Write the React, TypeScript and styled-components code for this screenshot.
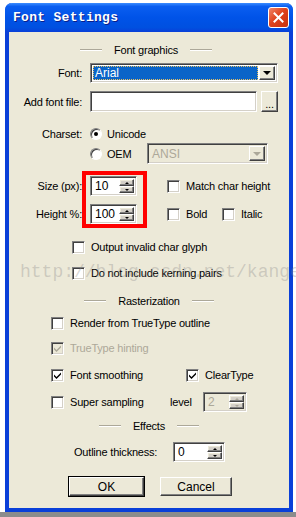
import styled, { createGlobalStyle } from "styled-components";

const GlobalStyle = createGlobalStyle`
  html, body { margin: 0; padding: 0; background: #fff; }
  body { width: 296px; height: 517px; overflow: hidden; font-family: "Liberation Sans", Arial, sans-serif; }
`;

const sunken = `
  border: 1px solid;
  border-color: #808080 #fff #fff #808080;
  box-shadow: inset 1px 1px #404040, inset -1px -1px #d4d0c8;
`;

const raised = `
  border: 1px solid;
  border-color: #fff #404040 #404040 #fff;
  box-shadow: inset -1px -1px #808080, inset 1px 1px #ece9d8;
`;

const Page = styled.div`
  position: relative;
  width: 296px;
  height: 517px;
  overflow: hidden;
  display: flex;
  flex-direction: column;
`;

const Window = styled.div`
  margin: 3px 0 0 5px;
  width: 280px;
  height: 505px;
  border: 4px solid #0a3fd8;
  border-top: none;
  border-radius: 7px 7px 0 0;
  display: flex;
  flex-direction: column;
  background: #ece9d8;
`;

const TitleBar = styled.div`
  height: 29px;
  margin: 0 -4px;
  border-radius: 7px 7px 0 0;
  background: linear-gradient(#3b8cff 0%, #0a5ef0 12%, #0053e8 50%, #0050e0 85%, #0a3fd8 100%);
  display: flex;
  align-items: center;
  justify-content: space-between;
  padding: 0 4px 0 8px;
`;

const TitleText = styled.div`
  font-family: "Liberation Mono", "DejaVu Sans Mono", monospace;
  font-weight: bold;
  font-size: 13px;
  letter-spacing: 0.3px;
  color: #fff;
  text-shadow: 1px 1px #0a1e8a;
`;

const CloseButton = styled.div`
  width: 19px;
  height: 19px;
  border: 1px solid #fff;
  border-radius: 3px;
  background: linear-gradient(135deg, #f0866a, #e0441e 45%, #c8320e);
  display: flex;
  align-items: center;
  justify-content: center;
`;

const Body = styled.div`
  position: relative;
  flex: 1;
  display: flex;
  flex-direction: column;
  font-size: 11px;
  letter-spacing: -0.2px;
  color: #000;
`;

const Row = styled.div<{ $top: number; $h: number; $indent?: number }>`
  margin-top: ${(p) => p.$top}px;
  height: ${(p) => p.$h}px;
  padding-left: ${(p) => p.$indent ?? 0}px;
  display: flex;
  align-items: center;
  flex-shrink: 0;
`;

const Cell = styled.div<{ $w: number }>`
  width: ${(p) => p.$w}px;
  flex-shrink: 0;
  display: flex;
  align-items: center;
  white-space: nowrap;
`;

const Section = styled.div<{ $top: number; $shift?: number }>`
  margin-top: ${(p) => p.$top}px;
  height: 14px;
  display: flex;
  align-items: center;
  justify-content: center;
  gap: 12px;
  margin-left: ${(p) => p.$shift ?? 0}px;
  flex-shrink: 0;
`;

const Etch = styled.div`
  width: 22px;
  height: 1px;
  background: #aca899;
  border-bottom: 1px solid #fff;
`;

const Label = styled.div`
  width: 73px;
  text-align: right;
  margin-right: 8px;
  white-space: nowrap;
`;

const Text = styled.span<{ $disabled?: boolean; $gap?: number }>`
  white-space: nowrap;
  color: ${(p) => (p.$disabled ? "#aca899" : "#000")};
  margin-left: ${(p) => p.$gap ?? 6}px;
`;

const Combo = styled.div<{ $w: number; $disabled?: boolean }>`
  ${sunken}
  width: ${(p) => p.$w}px;
  height: 100%;
  box-sizing: border-box;
  background: ${(p) => (p.$disabled ? "#ece9d8" : "#fff")};
  display: flex;
  align-items: stretch;
  padding: 2px;
  gap: 1px;
`;

const ComboValue = styled.div<{ $selected?: boolean; $disabled?: boolean }>`
  flex: 1;
  display: flex;
  align-items: center;
  padding-left: 2px;
  font-size: 12px;
  letter-spacing: 0;
  color: ${(p) => (p.$selected ? "#fff" : p.$disabled ? "#aca899" : "#000")};
  background: ${(p) => (p.$selected ? "#0a64c8" : "transparent")};
  outline: ${(p) => (p.$selected ? "1px dotted #e8c060" : "none")};
  outline-offset: -1px;
`;

const DropButton = styled.div`
  ${raised}
  width: 14px;
  background: #ece9d8;
  display: flex;
  align-items: center;
  justify-content: center;
`;

const Arrow = styled.div<{ $up?: boolean; $disabled?: boolean; $size?: number }>`
  width: 0;
  height: 0;
  border-left: ${(p) => p.$size ?? 4}px solid transparent;
  border-right: ${(p) => p.$size ?? 4}px solid transparent;
  ${(p) => (p.$up ? "border-bottom" : "border-top")}: ${(p) => p.$size ?? 4}px solid
    ${(p) => (p.$disabled ? "#aca899" : "#000")};
`;

const TextBox = styled.div<{ $w: number }>`
  ${sunken}
  width: ${(p) => p.$w}px;
  height: 100%;
  box-sizing: border-box;
  background: #fff;
`;

const BrowseButton = styled.div`
  ${raised}
  width: 17px;
  height: 100%;
  box-sizing: border-box;
  margin-left: 4px;
  background: #ece9d8;
  display: flex;
  align-items: flex-end;
  justify-content: center;
  padding-bottom: 4px;
  font-size: 11px;
  line-height: 6px;
`;

const RadioDot = styled.div<{ $on?: boolean }>`
  width: 12px;
  height: 12px;
  flex-shrink: 0;
  box-sizing: border-box;
  border-radius: 50%;
  border: 1px solid;
  border-color: #808080 #fff #fff #808080;
  box-shadow: inset 1px 1px #404040;
  background: #fff;
  display: flex;
  align-items: center;
  justify-content: center;
  &::after {
    content: "";
    width: 4px;
    height: 4px;
    border-radius: 50%;
    background: ${(p) => (p.$on ? "#000" : "transparent")};
  }
`;

const Box = styled.div<{ $disabled?: boolean }>`
  width: 13px;
  height: 13px;
  box-sizing: border-box;
  flex-shrink: 0;
  ${sunken}
  background: ${(p) => (p.$disabled ? "#ece9d8" : "#fff")};
  display: flex;
  align-items: center;
  justify-content: center;
`;

const Spin = styled.div<{ $w: number; $disabled?: boolean }>`
  ${sunken}
  width: ${(p) => p.$w}px;
  height: 100%;
  flex-shrink: 0;
  box-sizing: border-box;
  background: ${(p) => (p.$disabled ? "#ece9d8" : "#fff")};
  display: flex;
  padding: 2px;
`;

const SpinValue = styled.div<{ $disabled?: boolean }>`
  flex: 1;
  display: flex;
  align-items: center;
  padding-left: 2px;
  font-size: 12px;
  letter-spacing: 0;
  color: ${(p) => (p.$disabled ? "#aca899" : "#000")};
`;

const SpinButtons = styled.div`
  width: 15px;
  display: flex;
  flex-direction: column;
`;

const SpinHalf = styled.div`
  ${raised}
  flex: 1;
  background: #d4d0c8;
  display: flex;
  align-items: center;
  justify-content: center;
`;

const PushButton = styled.div<{ $w: number; $default?: boolean; $gap?: number }>`
  width: ${(p) => p.$w}px;
  height: 100%;
  box-sizing: border-box;
  margin-left: ${(p) => p.$gap ?? 0}px;
  border: 1px solid ${(p) => (p.$default ? "#000" : "transparent")};
  display: flex;
`;

const PushFace = styled.div`
  ${raised}
  flex: 1;
  background: #ece9d8;
  display: flex;
  align-items: center;
  justify-content: center;
  font-size: 12px;
  letter-spacing: 0;
`;

const Highlight = styled.div`
  position: absolute;
  left: 73px;
  top: 139px;
  width: 65px;
  height: 57px;
  box-sizing: border-box;
  border: 4px solid #ff0000;
  pointer-events: none;
`;

const Watermark = styled.div`
  position: absolute;
  left: 20px;
  top: 262px;
  font-family: "Liberation Mono", "Courier New", monospace;
  font-size: 18px;
  line-height: 20px;
  color: rgba(140, 140, 140, 0.35);
  white-space: nowrap;
  pointer-events: none;
`;

const BottomStrip = styled.div`
  height: 5px;
  margin-top: auto;
  background: #8c8c8c;
`;

const CheckMark = ({ color }: { color: string }) => (
  <svg width="9" height="9" viewBox="0 0 9 9">
    <path d="M1 3.5 L3.5 6 L8 1.5 L8 3.5 L3.5 8 L1 5.5 Z" fill={color} />
  </svg>
);

const Check = ({ checked, disabled }: { checked?: boolean; disabled?: boolean }) => (
  <Box $disabled={disabled}>{checked && <CheckMark color={disabled ? "#aca899" : "#000"} />}</Box>
);

const SpinBox = ({ w, value, disabled }: { w: number; value: string; disabled?: boolean }) => (
  <Spin $w={w} $disabled={disabled}>
    <SpinValue $disabled={disabled}>{value}</SpinValue>
    <SpinButtons>
      <SpinHalf>
        <Arrow $up $size={2} $disabled={disabled} />
      </SpinHalf>
      <SpinHalf>
        <Arrow $size={2} $disabled={disabled} />
      </SpinHalf>
    </SpinButtons>
  </Spin>
);

export default function App() {
  return (
    <Page>
      <GlobalStyle />
      <Window>
        <TitleBar>
          <TitleText>Font Settings</TitleText>
          <CloseButton>
            <svg width="11" height="11" viewBox="0 0 11 11">
              <path d="M1.5 1.5 L9.5 9.5 M9.5 1.5 L1.5 9.5" stroke="#fff" strokeWidth="2" strokeLinecap="square" />
            </svg>
          </CloseButton>
        </TitleBar>
        <Body>
          <Section $top={11} $shift={-6}>
            <Etch />
            <span>Font graphics</span>
            <Etch />
          </Section>

          <Row $top={6} $h={20}>
            <Label>Font:</Label>
            <Combo $w={188}>
              <ComboValue $selected>Arial</ComboValue>
              <DropButton>
                <Arrow />
              </DropButton>
            </Combo>
          </Row>

          <Row $top={8} $h={21}>
            <Label>Add font file:</Label>
            <TextBox $w={167} />
            <BrowseButton>...</BrowseButton>
          </Row>

          <Row $top={14} $h={16}>
            <Label>Charset:</Label>
            <RadioDot $on />
            <Text $gap={5}>Unicode</Text>
          </Row>

          <Row $top={1} $h={21} $indent={81}>
            <Cell $w={57}>
              <RadioDot />
              <Text $gap={5}>OEM</Text>
            </Cell>
            <Combo $w={121} $disabled>
              <ComboValue $disabled>ANSI</ComboValue>
              <DropButton>
                <Arrow $disabled />
              </DropButton>
            </Combo>
          </Row>

          <Row $top={12} $h={20}>
            <Label>Size (px):</Label>
            <Cell $w={77}>
              <SpinBox w={47} value="10" />
            </Cell>
            <Check />
            <Text>Match char height</Text>
          </Row>

          <Row $top={8} $h={20}>
            <Label>Height %:</Label>
            <Cell $w={77}>
              <SpinBox w={47} value="100" />
            </Cell>
            <Cell $w={55}>
              <Check />
              <Text>Bold</Text>
            </Cell>
            <Check />
            <Text>Italic</Text>
          </Row>

          <Row $top={15} $h={16} $indent={63}>
            <Check />
            <Text>Output invalid char glyph</Text>
          </Row>

          <Row $top={10} $h={16} $indent={63}>
            <Check />
            <Text>Do not include kerning pairs</Text>
          </Row>

          <Section $top={13}>
            <Etch />
            <span>Rasterization</span>
            <Etch />
          </Section>

          <Row $top={7} $h={16} $indent={42}>
            <Check />
            <Text>Render from TrueType outline</Text>
          </Row>

          <Row $top={9} $h={16} $indent={42}>
            <Check checked disabled />
            <Text $disabled>TrueType hinting</Text>
          </Row>

          <Row $top={11} $h={16} $indent={42}>
            <Cell $w={135}>
              <Check checked />
              <Text>Font smoothing</Text>
            </Cell>
            <Check checked />
            <Text>ClearType</Text>
          </Row>

          <Row $top={9} $h={20} $indent={42}>
            <Cell $w={119}>
              <Check />
              <Text>Super sampling</Text>
            </Cell>
            <Cell $w={33}>level</Cell>
            <SpinBox w={44} value="2" disabled />
          </Row>

          <Section $top={7}>
            <Etch />
            <span>Effects</span>
            <Etch />
          </Section>

          <Row $top={9} $h={20} $indent={65}>
            <Cell $w={99}>Outline thickness:</Cell>
            <SpinBox w={52} value="0" />
          </Row>

          <Row $top={14} $h={21} $indent={59}>
            <PushButton $w={77} $default>
              <PushFace>OK</PushFace>
            </PushButton>
            <PushButton $w={74} $gap={14}>
              <PushFace>Cancel</PushFace>
            </PushButton>
          </Row>

          <Highlight />
        </Body>
      </Window>
      <BottomStrip />
      <Watermark>http://blog.csdn.net/kangear</Watermark>
    </Page>
  );
}
